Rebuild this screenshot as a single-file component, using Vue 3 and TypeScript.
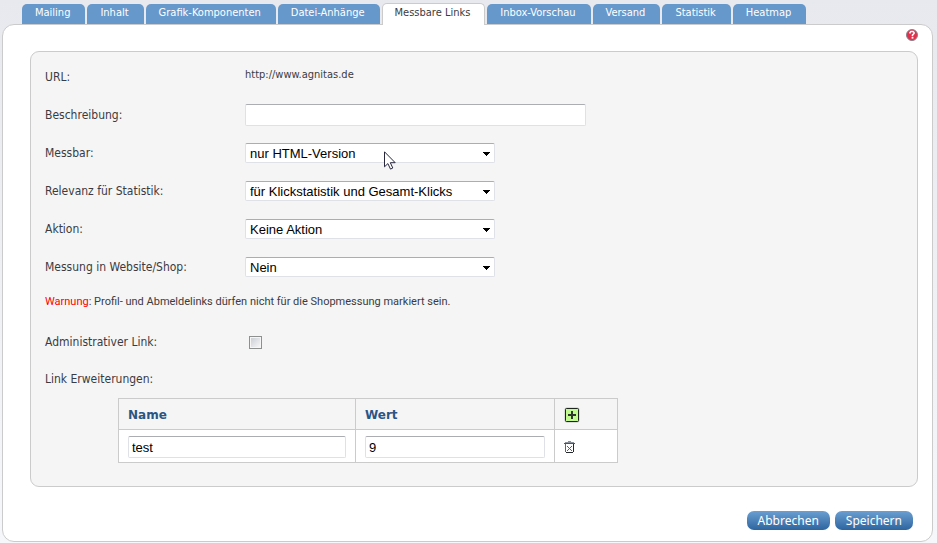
<script setup lang="ts">
import { ref } from 'vue'

interface SelectField {
  id: string
  label: string
  value: string
  pointer?: boolean
}

const tabs: string[] = [
  'Mailing',
  'Inhalt',
  'Grafik-Komponenten',
  'Datei-Anhänge',
  'Messbare Links',
  'Inbox-Vorschau',
  'Versand',
  'Statistik',
  'Heatmap',
]
const activeTab = ref('Messbare Links')

const description = ref('')
const administrative = ref(false)

const selects = ref<SelectField[]>([
  { id: 'measurable', label: 'Messbar:', value: 'nur HTML-Version', pointer: true },
  { id: 'relevance', label: 'Relevanz für Statistik:', value: 'für Klickstatistik und Gesamt-Klicks' },
  { id: 'action', label: 'Aktion:', value: 'Keine Aktion' },
  { id: 'shop', label: 'Messung in Website/Shop:', value: 'Nein' },
])

const extensions = ref([{ name: 'test', value: '9' }])

function addExtension() {
  extensions.value.push({ name: '', value: '' })
}

function removeExtension(index: number) {
  extensions.value.splice(index, 1)
}
</script>

<template>
  <div class="page">
    <nav class="tabs">
      <a
        v-for="tab in tabs"
        :key="tab"
        href="#"
        class="tab"
        :class="{ active: tab === activeTab }"
        @click.prevent="activeTab = tab"
      >{{ tab }}</a>
    </nav>

    <main class="panel">
      <div class="help-row">
        <button type="button" class="icon-button" aria-label="Hilfe">
          <svg width="12" height="12" viewBox="0 0 12 12">
            <circle cx="6" cy="6" r="5.5" fill="#e2304c" stroke="#85838c" />
            <path d="M4 4.6V3.5L5 2.5h2l1 1v1L6.5 6v1.2" fill="none" stroke="#fff" stroke-width="1.6" />
            <path d="M5.6 8h1.8v1.6H5.6z" fill="#fff" />
          </svg>
        </button>
      </div>

      <form id="link-form" class="card" @submit.prevent>
        <div class="row">
          <span class="label">URL:</span>
          <span class="url">http://www.agnitas.de</span>
        </div>
        <div class="row">
          <label class="label" for="description">Beschreibung:</label>
          <input id="description" v-model="description" class="field text-field" type="text" />
        </div>
        <div v-for="field in selects" :key="field.id" class="row">
          <label class="label" :for="field.id">{{ field.label }}</label>
          <div class="select-box">
            <select :id="field.id" v-model="field.value" class="field">
              <option>{{ field.value }}</option>
            </select>
            <svg class="arrow" width="7" height="4" viewBox="0 0 7 4" shape-rendering="crispEdges">
              <path d="M0 0h7v1H6v1H5v1H4v1H3V3H2V2H1V1H0z" fill="#000" />
            </svg>
            <svg v-if="field.pointer" class="pointer" width="12" height="19" viewBox="0 0 12 19">
              <path
                d="M.5.8v15l3.4-3.2 2.6 5.5 2.3-1.1-2.5-5.3h4.9z"
                fill="#fff"
                stroke="#26263c"
                stroke-linejoin="round"
              />
            </svg>
          </div>
        </div>

        <p class="warning"><span class="warning-word">Warnung</span>: Profil- und Abmeldelinks dürfen nicht für die Shopmessung markiert sein.</p>

        <div class="row check-row">
          <label class="label" for="administrative">Administrativer Link:</label>
          <input id="administrative" v-model="administrative" class="check" type="checkbox" />
        </div>
        <div class="row extension-row">
          <span id="extension-label" class="label">Link Erweiterungen:</span>
        </div>

        <table class="extensions" aria-labelledby="extension-label">
          <thead>
            <tr>
              <th class="name-col">Name</th>
              <th class="value-col">Wert</th>
              <th class="action-col">
                <button type="button" class="icon-button" aria-label="Hinzufügen" @click="addExtension">
                  <svg width="16" height="16" viewBox="0 0 16 16">
                    <rect x=".5" y=".5" width="15" height="15" rx="2" fill="#c4c4c8" />
                    <rect x="1.5" y="1.5" width="13" height="13" rx="1" fill="#c1fa8e" stroke="#1e2420" />
                    <path d="M4 7h3V4h2v3h3v2H9v3H7V9H4z" fill="#30372e" />
                  </svg>
                </button>
              </th>
            </tr>
          </thead>
          <tbody>
            <tr v-for="(extension, index) in extensions" :key="index">
              <td><input v-model="extension.name" class="field" type="text" aria-label="Name" /></td>
              <td><input v-model="extension.value" class="field" type="text" aria-label="Wert" /></td>
              <td>
                <button type="button" class="icon-button" aria-label="Löschen" @click="removeExtension(index)">
                  <svg width="11" height="12" viewBox="0 0 11 12" shape-rendering="crispEdges">
                    <path d="M4 0h3v1H4zM1 1h9v1H1z" fill="#8b929b" />
                    <path d="M0 2h11v1H0z" fill="#4b5563" />
                    <path d="M1 3h1v8H1z" fill="#5c6570" />
                    <path d="M9 3h1v8H9zM2 11h7v1H2z" fill="#25282d" />
                    <path
                      d="M3 5h1v1H3zM7 5h1v1H7zM4 6h1v1H4zM6 6h1v1H6zM5 7h1v1H5zM4 8h1v1H4zM6 8h1v1H6zM3 9h1v1H3zM7 9h1v1H7z"
                      fill="#c92f48"
                    />
                  </svg>
                </button>
              </td>
            </tr>
          </tbody>
        </table>
      </form>

      <div class="actions">
        <button type="button" class="action">Abbrechen</button>
        <button type="submit" form="link-form" class="action">Speichern</button>
      </div>
    </main>
  </div>
</template>

<style>
body {
  background: linear-gradient(#e8e9ee, #f6f7fa) no-repeat #f6f7fa;
}
</style>

<style scoped>
.page {
  padding: 3px 4px 2px 2px;
  color: #3b3b42;
  font-family: Tahoma, "DejaVu Sans Condensed", "Noto Sans", sans-serif;
  font-size: 12px;
  line-height: 16px;
}

.page * {
  box-sizing: border-box;
}

.tabs {
  position: relative;
  display: flex;
  align-items: flex-end;
  gap: 2px;
  padding-left: 20px;
  margin-bottom: -1px;
}

.tab {
  height: 20px;
  margin-bottom: 1px;
  padding: 1px 15px 1px 13px;
  border-radius: 5px 5px 0 0;
  background: #6698cb;
  color: #fff;
  font-size: 11px;
  text-decoration: none;
  white-space: nowrap;
}

.tab.active {
  height: 22px;
  margin-bottom: 0;
  padding: 1px 14px 1px 12px;
  border: 1px solid #cbcbcb;
  border-bottom: 0;
  background: #fff;
  color: #3b3b42;
}

.panel {
  padding: 0 14px 11px 27px;
  border: 1px solid #cbcbcb;
  border-radius: 12px;
  background: #fff;
}

.help-row {
  display: flex;
  align-items: flex-start;
  justify-content: flex-end;
  height: 26px;
  padding-top: 4px;
}

.icon-button {
  display: block;
  padding: 0;
  border: 0;
  background: none;
}

.icon-button svg {
  display: block;
}

.card {
  padding: 6px 14px 23px;
  border: 1px solid #cbcbcb;
  border-radius: 9px;
  background: #f5f5f5;
}

.row {
  display: flex;
  align-items: center;
  height: 38px;
}

.label {
  flex: 0 0 200px;
}

.url {
  padding-bottom: 4px;
  font-size: 11px;
}

.field {
  display: block;
  width: 100%;
  height: 22px;
  padding: 0 3px;
  border: 1px solid #dfe1e8;
  border-top-color: #abadb3;
  border-radius: 2px;
  background: #fff;
  color: #000;
  font-family: "Liberation Sans", Arial, sans-serif;
  font-size: 13px;
}

.text-field {
  width: 341px;
}

.select-box {
  position: relative;
  width: 250px;
}

select.field {
  height: 20px;
  padding: 0 4px;
  appearance: none;
}

.arrow {
  position: absolute;
  top: 9px;
  right: 5px;
}

.pointer {
  position: absolute;
  top: 8px;
  left: 139px;
}

.warning {
  margin: 8px 0 14px;
  font-family: Tahoma, Roboto, sans-serif;
  font-size: 11px;
}

.warning-word {
  color: #f00;
}

.check-row {
  height: 36px;
}

.check {
  width: 13px;
  height: 13px;
  margin: 0 4px;
  border: 1px solid #8e8f8f;
  background: linear-gradient(135deg, #cbcfd5, #f6f6f6) center / 9px 9px no-repeat #f6f6f6;
  appearance: none;
}

.check:checked {
  background: #4a6f9c;
}

.extension-row {
  height: 38px;
}

.extensions {
  width: 500px;
  margin-left: 73px;
  border-collapse: collapse;
  table-layout: fixed;
}

.extensions th,
.extensions td {
  padding: 2px 9px 0;
  border: 1px solid #cbcbcb;
}

.extensions th {
  height: 31px;
  color: #2a5685;
  font-family: Verdana, "DejaVu Sans", sans-serif;
  font-size: 12px;
  text-align: left;
}

.extensions td {
  height: 33px;
  background: #fff;
}

.name-col {
  width: 237px;
}

.value-col {
  width: 199px;
}

.actions {
  display: flex;
  justify-content: flex-end;
  gap: 5px;
  padding: 24px 5px 0 0;
}

.action {
  height: 19px;
  padding: 0 11px;
  border: 0;
  border-radius: 7px;
  background: linear-gradient(#6b9fd2, #2e659f);
  color: #fff;
  font-family: Tahoma, "Noto Sans", sans-serif;
  font-size: 12px;
  line-height: 16px;
}
</style>
